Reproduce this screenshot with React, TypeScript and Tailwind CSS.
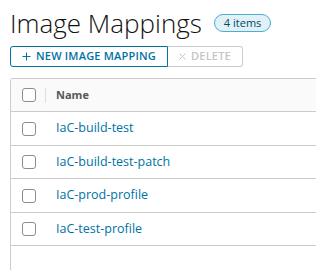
import React from "react";

const rows = ["IaC-build-test", "IaC-build-test-patch", "IaC-prod-profile", "IaC-test-profile"];
const heights = ["h-[34px]", "h-[33px]", "h-[34px]", "h-[33px]"];

function Box() {
  return <div className="w-[14px] h-[14px] rounded-[3px] border border-[#8c8c8c] bg-white" />;
}

export default function App() {
  return (
    <div className="w-[316px] h-[270px] overflow-hidden bg-white" style={{ fontFamily: "'Open Sans', Lato, sans-serif" }}>
      <div className="pl-[10px] pt-[5px]">
        <div className="flex items-center h-[36px]">
          <h1 className="text-[26px] font-light text-[#111] leading-none">Image Mappings</h1>
          <span className="ml-[12px] h-[18px] px-[9px] rounded-full border border-[#49afd9] bg-[#e1f1f6] text-[#004a70] text-[11px] leading-[16px] flex items-center">4 items</span>
        </div>
        <div className="flex mt-[5px] h-[21px]">
          <button className="flex items-center gap-[5px] border border-[#0072a3] rounded-l-[3px] pl-[11px] pr-[11px] text-[#0072a3] text-[11px] font-semibold tracking-[0.2px] bg-white">
            <svg width="9" height="9" viewBox="0 0 9 9"><path d="M4.5 0.5v8M0.5 4.5h8" stroke="#0072a3" strokeWidth="1" /></svg>
            NEW IMAGE MAPPING
          </button>
          <button className="flex items-center gap-[5px] border border-l-0 border-[#ccc] rounded-r-[3px] pl-[11px] pr-[11px] text-[#c5c5c5] text-[11px] font-semibold tracking-[0.2px] bg-white">
            <svg width="7" height="7" viewBox="0 0 7 7"><path d="M0.5 0.5l6 6M6.5 0.5l-6 6" stroke="#c5c5c5" strokeWidth="1" /></svg>
            DELETE
          </button>
        </div>
        <div className="mt-[11px] border-l border-t border-[#ccc] rounded-tl-[3px] h-[200px]">
          <div className="flex items-center h-[33px] bg-[#fafafa] border-b border-[#ccc]">
            <div className="w-[34px] flex justify-center pl-[2px]"><Box /></div>
            <div className="w-px h-[15px] bg-[#ddd]" />
            <div className="pl-[10px] text-[11px] font-bold text-[#565656]">Name</div>
          </div>
          {rows.map((r, i) => (
            <div key={r} className={`flex items-center ${heights[i]} border-b border-[#ccc] bg-white`}>
              <div className="w-[34px] flex justify-center pl-[2px]"><Box /></div>
              <div className="pl-[11px] text-[12.5px] text-[#0072a3]">{r}</div>
            </div>
          ))}
        </div>
      </div>
    </div>
  );
}
